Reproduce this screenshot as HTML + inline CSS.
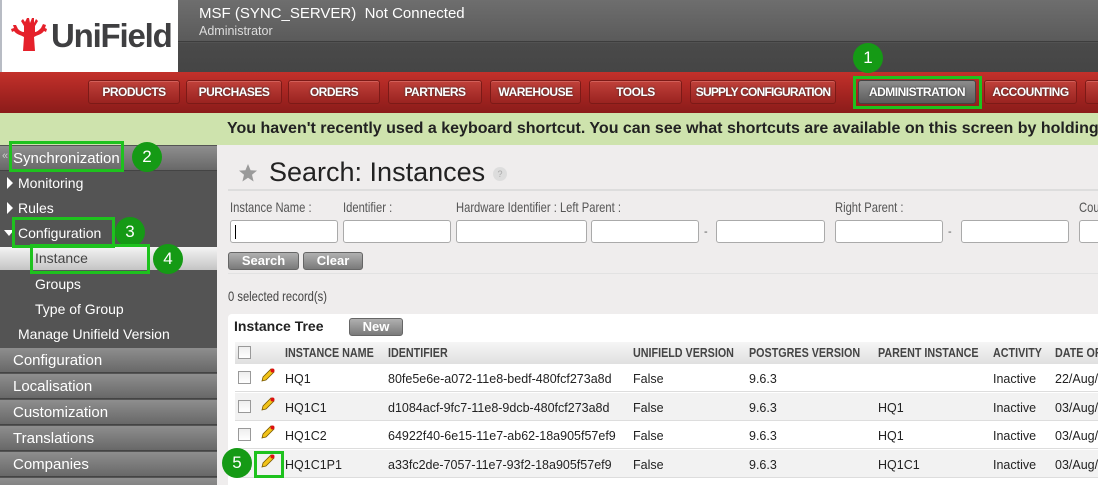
<!DOCTYPE html>
<html><head><meta charset="utf-8"><style>
*{box-sizing:border-box;margin:0;padding:0}
html,body{width:1098px;height:485px;overflow:hidden}
body{position:relative;background:#efeded;font-family:"Liberation Sans",Arial,sans-serif}
.a{position:absolute}
.btn{position:absolute;top:80px;height:24px;border-radius:3px;background:linear-gradient(#c0413a,#9a2320);border:1px solid #7c1a17;box-shadow:inset 0 1px 0 #d2605a;color:#fff;font-weight:bold;font-size:12px;text-align:center;line-height:22px;text-shadow:0 0 2px #333;letter-spacing:-0.5px;white-space:nowrap;overflow:hidden}
.sb{position:absolute;left:0;width:217px;height:25px;background:linear-gradient(#8e8e8e,#686868);border-bottom:1px solid #444;color:#fff;font-size:15px;line-height:25px;padding-left:13px}
.si{position:absolute;color:#fff;font-size:14px}
.tri{position:absolute;width:0;height:0}
.lab{position:absolute;top:199px;font-size:14px;color:#555;transform:scaleX(.8);transform-origin:left;white-space:nowrap}
.inp{position:absolute;top:220px;height:23px;background:#fff;border:1px solid #aaa;border-radius:3px}
.gb{position:absolute;border:3px solid #1ec21e}
.gc{position:absolute;width:30px;height:30px;border-radius:50%;background:#159a15;color:#fff;font-size:17px;text-align:center;line-height:30px}
.row{position:absolute;left:235px;width:863px;height:28px;border-bottom:1px solid #ddd;font-size:12.5px;color:#222}
.row span{position:absolute;top:8px}
.cb{position:absolute;left:3px;top:7px;width:13px;height:13px;border:1px solid #999;background:linear-gradient(#eee,#fff)}
.pen{position:absolute;left:26px;top:4px}
.th{position:absolute;top:346px;font-size:12.5px;font-weight:bold;color:#444;transform:scaleX(.86);transform-origin:left;white-space:nowrap}
.gbtn{position:absolute;height:18px;border-radius:3px;background:linear-gradient(#b0b0b0,#7a7a7a);border:1px solid #666;color:#fff;font-weight:bold;font-size:13px;text-align:center;line-height:16px}
</style></head><body>
<div class="a" style="left:0;top:0;width:178px;height:72px;background:#fff;border-left:2px solid #b8bcc4"></div>
<svg class="a" style="left:11px;top:17px" width="36" height="34" viewBox="0 0 36 34"><g fill="#e5202a"><path d="M12 34 L13 20 C10 18 6 18 3 14 L1 15 L0 12 L3 11 L2 8 L5 8 L7 12 C9 14 11 15 13 15 L13 9 L10 4 L12 2 L14 5 L16 1 L18 1 L19 6 L21 1 L23 1 L23 6 L25 2 L27 4 L24 9 L24 15 C26 15 28 13 30 11 L32 7 L35 8 L34 11 L36 12 L35 15 L33 14 C30 18 26 18 23 20 L24 34 Z"/></g></svg>
<div class="a" style="left:51px;top:17px;font-size:33px;font-weight:bold;color:#3f3f41;letter-spacing:-1.2px">UniField</div>
<div class="a" style="left:178px;top:0;width:920px;height:72px;background:linear-gradient(#6e6e6e 0,#5a5a5a 42px,#4a4a4a 43px,#454545 72px)"></div>
<div class="a" style="left:178px;top:41px;width:920px;height:1px;background:#3d3d3d"></div>
<div class="a" style="left:199px;top:5px;color:#fff;font-size:15px">MSF (SYNC_SERVER)&nbsp; Not Connected</div>
<div class="a" style="left:199px;top:24px;color:#ddd;font-size:12.5px">Administrator</div>
<div class="a" style="left:0;top:72px;width:1098px;height:41px;background:linear-gradient(#c3312b,#a12320 60%,#8b1c1a)"></div>
<div class="btn" style="left:88px;width:92px">PRODUCTS</div>
<div class="btn" style="left:186px;width:96px">PURCHASES</div>
<div class="btn" style="left:288px;width:92px">ORDERS</div>
<div class="btn" style="left:388px;width:94px">PARTNERS</div>
<div class="btn" style="left:490px;width:91px">WAREHOUSE</div>
<div class="btn" style="left:589px;width:93px">TOOLS</div>
<div class="btn" style="left:690px;width:146px;letter-spacing:-0.8px">SUPPLY CONFIGURATION</div>
<div class="btn" style="left:858px;width:118px;background:linear-gradient(#8c8c8c,#5d5d5d);border-color:#444;box-shadow:none">ADMINISTRATION</div>
<div class="btn" style="left:984px;width:93px">ACCOUNTING</div>
<div class="btn" style="left:1085px;width:30px"></div>
<div class="gb" style="left:853px;top:76px;width:129px;height:33px"></div>
<div class="gc" style="left:853px;top:43px">1</div>
<div class="a" style="left:0;top:113px;width:1098px;height:32px;background:#cee3ad"></div>
<div class="a" style="left:227px;top:120px;font-size:16px;font-weight:bold;color:#222;white-space:nowrap">You haven't recently used a keyboard shortcut. You can see what shortcuts are available on this screen by holding</div>
<div class="a" style="left:0;top:145px;width:217px;height:340px;background:#545454"></div>
<div class="sb" style="top:146px">Synchronization</div>
<div class="a" style="left:2px;top:150px;color:#ccc;font-size:11px">«</div>
<div class="tri" style="left:7px;top:177px;border-left:6px solid #fff;border-top:6px solid transparent;border-bottom:6px solid transparent"></div><div class="si" style="left:18px;top:175px">Monitoring</div>
<div class="tri" style="left:7px;top:202px;border-left:6px solid #fff;border-top:6px solid transparent;border-bottom:6px solid transparent"></div><div class="si" style="left:18px;top:200px">Rules</div>
<div class="tri" style="left:4px;top:230px;border-top:6px solid #fff;border-left:5px solid transparent;border-right:5px solid transparent"></div><div class="si" style="left:18px;top:225px">Configuration</div>
<div class="a" style="left:0;top:247px;width:217px;height:23px;background:linear-gradient(#f4f4f4,#c4c4c4)"></div>
<div class="si" style="left:35px;top:250px;color:#444">Instance</div>
<div class="si" style="left:35px;top:276px">Groups</div>
<div class="si" style="left:35px;top:301px">Type of Group</div>
<div class="si" style="left:18px;top:326px">Manage Unifield Version</div>
<div class="sb" style="top:348px">Configuration</div>
<div class="sb" style="top:374px">Localisation</div>
<div class="sb" style="top:400px">Customization</div>
<div class="sb" style="top:426px">Translations</div>
<div class="sb" style="top:452px">Companies</div>
<div class="sb" style="top:478px"></div>
<div class="gb" style="left:9px;top:141px;width:115px;height:31px"></div>
<div class="gc" style="left:132px;top:142px">2</div>
<div class="gb" style="left:12px;top:217px;width:103px;height:31px"></div>
<div class="gc" style="left:115px;top:217px">3</div>
<div class="gb" style="left:30px;top:244px;width:120px;height:30px"></div>
<div class="gc" style="left:153px;top:244px">4</div>
<svg class="a" style="left:238px;top:163px" width="20" height="20" viewBox="0 0 20 20"><path d="M10 1 L12.6 7.2 L19 7.6 L14 11.8 L15.6 18.5 L10 14.8 L4.4 18.5 L6 11.8 L1 7.6 L7.4 7.2Z" fill="#9a9a9a"/></svg>
<div class="a" style="left:269px;top:157px;font-size:27px;color:#222">Search: Instances</div>
<div class="a" style="left:493px;top:167px;width:14px;height:14px;border-radius:50%;background:#ddd;color:#aaa;font-size:9px;text-align:center;line-height:14px">?</div>
<div class="a" style="left:228px;top:189px;width:870px;height:2px;background:#ddd"></div>
<div class="lab" style="left:230px">Instance Name :</div>
<div class="lab" style="left:343px">Identifier :</div>
<div class="lab" style="left:456px">Hardware Identifier : Left Parent :</div>
<div class="lab" style="left:835px">Right Parent :</div>
<div class="lab" style="left:1079px">Cou</div>
<div class="inp" style="left:230px;width:108px"><div class="a" style="left:4px;top:4px;width:1px;height:14px;background:#000"></div></div>
<div class="inp" style="left:343px;width:108px"></div>
<div class="inp" style="left:456px;width:131px"></div>
<div class="inp" style="left:591px;width:108px"></div>
<div class="a" style="left:704px;top:226px;font-size:11px;color:#555">-</div>
<div class="inp" style="left:716px;width:109px"></div>
<div class="inp" style="left:835px;width:108px"></div>
<div class="a" style="left:948px;top:226px;font-size:11px;color:#555">-</div>
<div class="inp" style="left:961px;width:108px"></div>
<div class="inp" style="left:1079px;width:40px"></div>
<div class="gbtn" style="left:228px;top:252px;width:71px">Search</div>
<div class="gbtn" style="left:303px;top:252px;width:60px">Clear</div>
<div class="a" style="left:228px;top:273px;width:870px;height:1px;background:#e2e2e2"></div>
<div class="a" style="left:228px;top:288px;font-size:14px;color:#444;transform:scaleX(.8);transform-origin:left;white-space:nowrap">0 selected record(s)</div>
<div class="a" style="left:228px;top:314px;width:870px;height:171px;background:#fff;border-radius:4px 0 0 0"></div>
<div class="a" style="left:234px;top:318px;font-size:14px;font-weight:bold;color:#222">Instance Tree</div>
<div class="gbtn" style="left:349px;top:318px;width:54px;height:18px">New</div>
<div class="a" style="left:235px;top:342px;width:863px;height:22px;background:linear-gradient(#f6f6f6,#e0e0e0)"></div>
<div class="cb" style="left:238px;top:346px"></div>
<div class="th" style="left:285px">INSTANCE NAME</div>
<div class="th" style="left:388px">IDENTIFIER</div>
<div class="th" style="left:633px">UNIFIELD VERSION</div>
<div class="th" style="left:749px">POSTGRES VERSION</div>
<div class="th" style="left:878px">PARENT INSTANCE</div>
<div class="th" style="left:993px">ACTIVITY</div>
<div class="th" style="left:1055px">DATE OF</div>
<div class="row" style="top:364px;background:#fff"><div class="cb"></div><svg class="pen" width="14" height="14" viewBox="0 0 14 14"><path d="M1 13 L2 9 L10 1 L13 4 L5 12Z" fill="#f2c319" stroke="#7a5a00" stroke-width=".8"/><circle cx="11.5" cy="2.5" r="2" fill="#d11"/></svg><span style="left:50px">HQ1</span><span style="left:153px">80fe5e6e-a072-11e8-bedf-480fcf273a8d</span><span style="left:398px">False</span><span style="left:514px">9.6.3</span><span style="left:758px">Inactive</span><span style="left:820px">22/Aug/</span></div>
<div class="row" style="top:393px;background:#f2f2f2"><div class="cb"></div><svg class="pen" width="14" height="14" viewBox="0 0 14 14"><path d="M1 13 L2 9 L10 1 L13 4 L5 12Z" fill="#f2c319" stroke="#7a5a00" stroke-width=".8"/><circle cx="11.5" cy="2.5" r="2" fill="#d11"/></svg><span style="left:50px">HQ1C1</span><span style="left:153px">d1084acf-9fc7-11e8-9dcb-480fcf273a8d</span><span style="left:398px">False</span><span style="left:514px">9.6.3</span><span style="left:643px">HQ1</span><span style="left:758px">Inactive</span><span style="left:820px">03/Aug/</span></div>
<div class="row" style="top:421px;background:#fff"><div class="cb"></div><svg class="pen" width="14" height="14" viewBox="0 0 14 14"><path d="M1 13 L2 9 L10 1 L13 4 L5 12Z" fill="#f2c319" stroke="#7a5a00" stroke-width=".8"/><circle cx="11.5" cy="2.5" r="2" fill="#d11"/></svg><span style="left:50px">HQ1C2</span><span style="left:153px">64922f40-6e15-11e7-ab62-18a905f57ef9</span><span style="left:398px">False</span><span style="left:514px">9.6.3</span><span style="left:643px">HQ1</span><span style="left:758px">Inactive</span><span style="left:820px">03/Aug/</span></div>
<div class="row" style="top:450px;background:#f2f2f2"><div class="cb"></div><svg class="pen" width="14" height="14" viewBox="0 0 14 14"><path d="M1 13 L2 9 L10 1 L13 4 L5 12Z" fill="#f2c319" stroke="#7a5a00" stroke-width=".8"/><circle cx="11.5" cy="2.5" r="2" fill="#d11"/></svg><span style="left:50px">HQ1C1P1</span><span style="left:153px">a33fc2de-7057-11e7-93f2-18a905f57ef9</span><span style="left:398px">False</span><span style="left:514px">9.6.3</span><span style="left:643px">HQ1C1</span><span style="left:758px">Inactive</span><span style="left:820px">03/Aug/</span></div>
<div class="row" style="top:479px;height:6px;background:#fff;border:0"></div>
<div class="gb" style="left:254px;top:451px;width:30px;height:27px"></div>
<div class="gc" style="left:222px;top:448px">5</div>
</body></html>
